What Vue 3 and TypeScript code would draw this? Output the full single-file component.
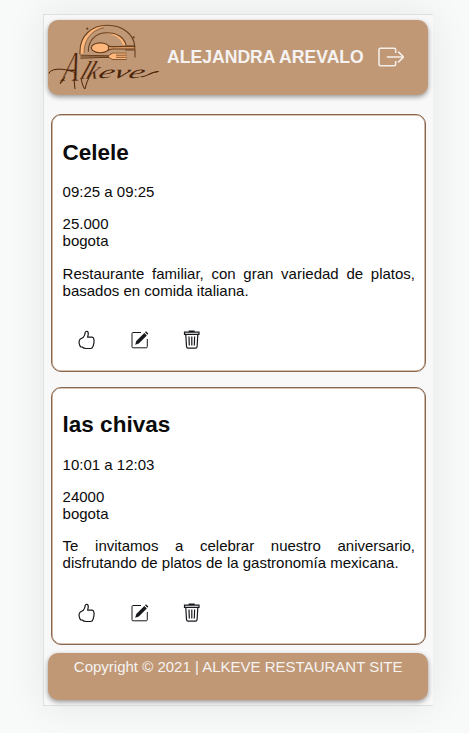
<script setup lang="ts">
interface Restaurant {
  name: string
  hours: string
  price: string
  city: string
  description: string
}

const restaurants: Restaurant[] = [
  {
    name: 'Celele',
    hours: '09:25 a 09:25',
    price: '25.000',
    city: 'bogota',
    description: 'Restaurante familiar, con gran variedad de platos, basados en comida italiana.',
  },
  {
    name: 'las chivas',
    hours: '10:01 a 12:03',
    price: '24000',
    city: 'bogota',
    description: 'Te invitamos a celebrar nuestro aniversario, disfrutando de platos de la gastronomía mexicana.',
  },
]
</script>

<template>
  <div class="page">
    <div class="panel">
      <header class="header">
        <svg class="logo" viewBox="48 20 112 75" aria-label="Alkeve">
          <g fill="none" stroke="#68401f" stroke-width="1.1">
            <path d="M80 54.5C79 36 91 25.3 107.5 25.3C93 29 84 38 84 53Z" fill="#ffb77b" stroke="none" />
            <path d="M80 54.5V51C80 36 91.5 25.3 107.5 25.3C123 25.3 134 35 134.7 46H125" />
            <path d="M84 53C84 40 91 30 104 27.8" stroke-width=".6" />
            <path d="M105 33C117 31.5 124 37 125.8 45H123C121 38 114 34 105 33Z" fill="#ffb77b" stroke="none" />
            <path d="M88.4 51.8C88 40 96 32.7 107 32.7C117 32.7 124 37.5 126 45" />
            <ellipse cx="100.3" cy="47.8" rx="9" ry="4.9" fill="#ffb77b" />
            <path d="M108.5 46.2L112 46.6L134.7 46.2V49H112L108.5 50Z" fill="#d99a66" />
            <path d="M125 50H135V57.5" />
            <path d="M80.5 55.3L109 55.7L112.5 53.3H126.5M126.5 59.3H112.5L109 57.3L80.5 58.3" />
            <path d="M109 55.7L112.5 53.5H126V59H112.5L109 57.2Z" fill="#ffb77b" stroke="none" />
            <path d="M116 55.2H126.5M116 57.3H126.5M80.5 56.8H109" stroke-width=".8" />
          </g>
          <g fill="#68401f">
            <circle cx="87.3" cy="28.7" r="1.1" />
            <circle cx="133.7" cy="37.3" r="1.1" />
          </g>
          <g class="wordmark">
            <text class="initial" transform="translate(61.5 81) scale(.62 1) skewX(-14)">A</text>
            <text class="stem" transform="translate(79 78.5) skewX(-20)">lk</text>
            <text transform="translate(97 77.5) skewX(-28)" textLength="45" lengthAdjust="spacingAndGlyphs">eve</text>
          </g>
          <path d="M49 73.5C50 69 60 68 69 70.5S77 75 74 75M141 77C147 76.5 151 72 158.5 71.5C154 72 151 73 149 74.5M63 79C58 85 60 86 65 77M74 79L75 89M81 78C82 84 84 89 85 89C86 84 88 79 91 74" fill="none" stroke="#4a250b" stroke-width="1" />
        </svg>
        <span class="user">ALEJANDRA AREVALO</span>
        <svg class="logout" viewBox="0 0 27 20" fill="none" stroke="#f4eee8" stroke-width="1.6">
          <path d="M18 6V2.5Q18 1 16.5 1H2.5Q1 1 1 2.5V17.5Q1 19 2.5 19H16.5Q18 19 18 17.5V14M9 10H26M20.5 4.5L26 10L20.5 15.5" />
        </svg>
      </header>

      <main class="list">
        <article v-for="item in restaurants" :key="item.name" class="card">
          <h2>{{ item.name }}</h2>
          <p>{{ item.hours }}</p>
          <p>{{ item.price }}<br>{{ item.city }}</p>
          <p class="description">{{ item.description }}</p>
          <div class="actions">
            <svg viewBox="0 0 18 20" fill="none" stroke="#17181c" stroke-width="1.2" stroke-linejoin="round">
              <path d="M2 9.3L5.4 7.2Q7 5.5 7.2 2.4Q7.7 1 9 1.3Q10.7 2 10.2 4.6L9.6 7.2H13.8Q16 7.4 15.7 9.2Q16.6 10.3 15.9 11.8Q16.3 13 15.5 14.4Q15.5 16 14.8 16.6Q14.5 18.3 12.6 18.5H8Q5.7 18.3 4.3 17H2.8Q1.5 15.7 1.1 13Q.8 10.5 2 9.3Z" />
            </svg>
            <svg viewBox="0 0 18 20" fill="none" stroke="#17181c">
              <path d="M10 2.5H2Q1 2.5 1 3.5V16.8Q1 17.8 2 17.8H15.2Q16.3 17.8 16.3 16.8V9" stroke-width="1" />
              <path d="M4.2 14.8L5.3 11L13.3 3L15.8 5.4L7.8 13.4Z" fill="#17181c" stroke="none" />
              <path d="M14 2.3L15 1.3L17.3 3.6L16.4 4.7Z" fill="#17181c" stroke="none" />
            </svg>
            <svg viewBox="0 0 18 20" fill="none" stroke="#17181c" stroke-width="1.2">
              <path d="M6.3 2V1H11.1V2M1.5 2.2H16V4.4H1.5ZM2.8 4.7L3.5 16.5Q3.6 18.2 5.1 18.2H12.5Q14 18.2 14.1 16.5L14.8 4.7M6 6.5L6.3 15.5M8.8 6.5V15.5M11.6 6.5L11.3 15.5" />
            </svg>
          </div>
        </article>
      </main>

      <footer class="footer">Copyright © 2021 | ALKEVE RESTAURANT SITE</footer>
    </div>
  </div>
</template>

<style>
body {
  margin: 0;
  background: #f8faf9;
}
</style>

<style scoped>
.page {
  box-sizing: border-box;
  height: 733px;
  padding: 14px 36px 0 43px;
  overflow: hidden;
  font: 15px/17.3px "Liberation Sans", Arial, sans-serif;
  color: #0b0b0b;
}
.panel {
  box-sizing: border-box;
  height: 692px;
  padding: 4.5px 5px 0;
  border: 1px solid #dedfdf;
  border-right: 0;
  background: #f8f8f8;
  box-shadow: 0 0 36px rgba(0, 0, 0, .08);
}
.header,
.footer {
  box-sizing: border-box;
  border-radius: 10px;
  background: #c19875;
  box-shadow: 0 2px 5px rgba(0, 0, 0, .4);
  color: #f5f3f2;
  margin-left: -.6px;
}
.header {
  display: flex;
  align-items: center;
  height: 75.5px;
}
.logo {
  flex: none;
  width: 112px;
  height: 75px;
}
.wordmark {
  fill: #4a250b;
  font: italic 18px "Liberation Serif", serif;
}
.initial {
  font-size: 43px;
  stroke: #c19875;
  stroke-width: .6px;
}
.stem {
  font-size: 26px;
  letter-spacing: -1px;
  stroke: #c19875;
  stroke-width: .3px;
}
.user {
  flex: none;
  width: 197px;
  margin-left: 6.6px;
  font-size: 17.6px;
  font-weight: bold;
  white-space: nowrap;
}
.logout {
  flex: none;
  width: 26.5px;
  height: 20px;
  margin-left: 13.6px;
}
.list {
  display: grid;
  gap: 14.5px;
  padding: 19px 2px 0;
}
.card {
  box-sizing: border-box;
  height: 258px;
  padding: 0 10px 0 10.6px;
  border: 1px solid #8a6549;
  border-radius: 10px;
  background: #fff;
  box-shadow: inset 0 0 0 .6px #a88a73;
}
h2 {
  margin: 24.5px 0 17.5px;
  font-size: 22.5px;
  line-height: 26px;
}
p {
  margin: 0 0 14.9px;
}
.description {
  text-align: justify;
}
.actions {
  display: flex;
  gap: 34.8px;
  padding: 16px 15.3px 0;
}
.actions svg {
  width: 18px;
  height: 20px;
}
.footer {
  height: 47px;
  margin-top: 8.7px;
  padding-top: 4.5px;
  text-align: center;
  white-space: nowrap;
}
</style>
